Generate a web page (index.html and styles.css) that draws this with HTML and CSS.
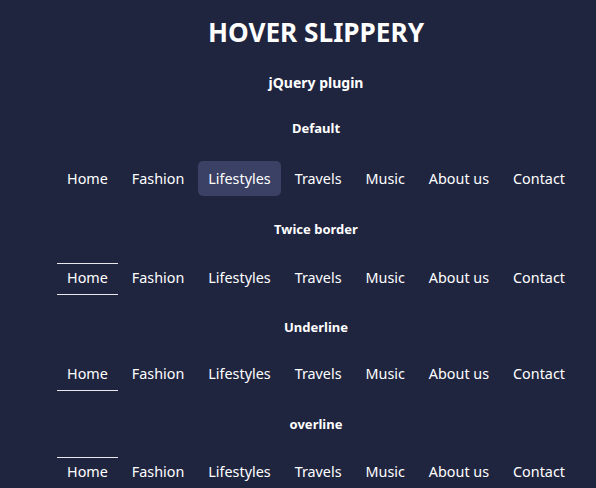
FILE: index.html
```html
<!DOCTYPE html>
<html lang="en">
<head>
<meta charset="utf-8">
<title>Hover Slippery</title>
<link rel="stylesheet" href="styles.css">
</head>
<body>
<div class="page">
  <h1 class="title">HOVER SLIPPERY</h1>
  <p class="subtitle">jQuery plugin</p>

  <h3 class="section-title first">Default</h3>
  <ul class="nav nav-default">
    <li>Home</li>
    <li>Fashion</li>
    <li class="active">Lifestyles</li>
    <li>Travels</li>
    <li>Music</li>
    <li>About us</li>
    <li>Contact</li>
  </ul>

  <h3 class="section-title">Twice border</h3>
  <ul class="nav nav-line nav-twice">
    <li class="active">Home</li>
    <li>Fashion</li>
    <li>Lifestyles</li>
    <li>Travels</li>
    <li>Music</li>
    <li>About us</li>
    <li>Contact</li>
  </ul>

  <h3 class="section-title tight">Underline</h3>
  <ul class="nav nav-line nav-under">
    <li class="active">Home</li>
    <li>Fashion</li>
    <li>Lifestyles</li>
    <li>Travels</li>
    <li>Music</li>
    <li>About us</li>
    <li>Contact</li>
  </ul>

  <h3 class="section-title">overline</h3>
  <ul class="nav nav-line nav-over">
    <li class="active">Home</li>
    <li>Fashion</li>
    <li>Lifestyles</li>
    <li>Travels</li>
    <li>Music</li>
    <li>About us</li>
    <li>Contact</li>
  </ul>
</div>
</body>
</html>
```

FILE: styles.css
```css
html, body {
  margin: 0;
  padding: 0;
  background: #20253f;
}

body {
  font-family: "Noto Sans", "Open Sans", sans-serif;
  color: #ffffff;
  height: 488px;
  overflow: hidden;
}

.page {
  padding-left: 36px;
  text-align: center;
}

.title {
  margin: 12px 0 0;
  font-size: 26.2px;
  line-height: 40px;
  font-weight: 700;
}

.subtitle {
  margin: 21px 0 0;
  font-size: 14px;
  line-height: 20px;
  font-weight: 700;
}

.section-title {
  margin: 23px 0 0;
  font-size: 13px;
  line-height: 20px;
  font-weight: 700;
}

.section-title.first {
  margin-top: 25px;
}

.section-title.tight {
  margin-top: 22px;
}

.nav {
  list-style: none;
  margin: 23px 0 0;
  padding: 0;
  display: flex;
  justify-content: center;
  gap: 4px;
  font-size: 14.35px;
}

.nav li {
  padding: 0 10px;
  white-space: nowrap;
}

.nav-default li {
  line-height: 35px;
  border-radius: 5px;
}

.nav-default li.active {
  background: #3b4165;
}

.nav-line li {
  line-height: 29px;
  padding-bottom: 3px;
}

.nav-twice {
  margin-top: 24px;
}

.nav-under {
  margin-top: 22px;
}

.nav-over {
  margin-top: 23px;
}

.nav-twice li.active {
  box-shadow: inset 0 1px 0 #e8e8ee, inset 0 -1px 0 #e8e8ee;
}

.nav-under li.active {
  box-shadow: inset 0 -1px 0 #e8e8ee;
}

.nav-over li.active {
  box-shadow: inset 0 1px 0 #e8e8ee;
}
```
